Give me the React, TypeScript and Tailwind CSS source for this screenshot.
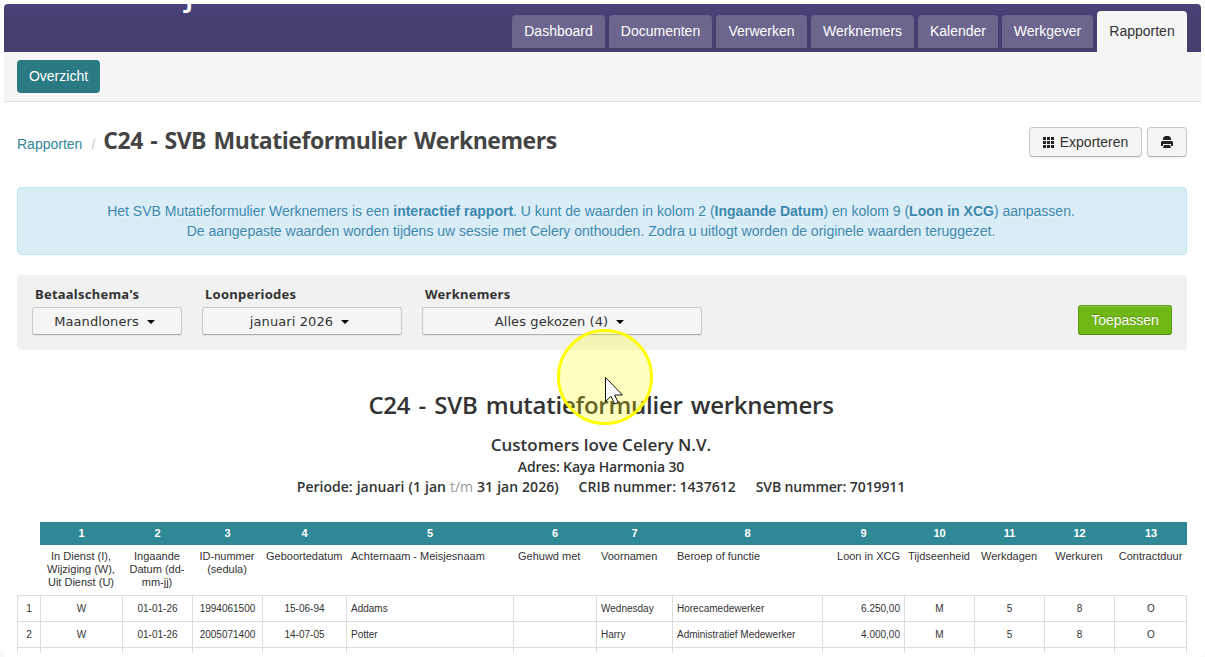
import type { ReactNode } from 'react';

const tabs = [
	{ label: 'Dashboard', width: 'w-[93px]' },
	{ label: 'Documenten', width: 'w-[103px]' },
	{ label: 'Verwerken', width: 'w-[91px]' },
	{ label: 'Werknemers', width: 'w-[103px]' },
	{ label: 'Kalender', width: 'w-[80px]' },
	{ label: 'Werkgever', width: 'w-[91px]' },
];

const columns = [
	{ label: 'In Dienst (I), Wijziging (W), Uit Dienst (U)', align: 'text-center' },
	{ label: 'Ingaande Datum (dd-mm-jj)', align: 'text-center' },
	{ label: 'ID-nummer (sedula)', align: 'text-center' },
	{ label: 'Geboortedatum', align: 'text-center' },
	{ label: 'Achternaam - Meisjesnaam', align: 'text-left' },
	{ label: 'Gehuwd met', align: 'text-left' },
	{ label: 'Voornamen', align: 'text-left' },
	{ label: 'Beroep of functie', align: 'text-left' },
	{ label: 'Loon in XCG', align: 'text-right' },
	{ label: 'Tijdseenheid', align: 'text-center' },
	{ label: 'Werkdagen', align: 'text-center' },
	{ label: 'Werkuren', align: 'text-center' },
	{ label: 'Contractduur', align: 'text-center' },
];

const rows = [
	['W', '01-01-26', '1994061500', '15-06-94', 'Addams', '', 'Wednesday', 'Horecamedewerker', '6.250,00', 'M', '5', '8', 'O'],
	['W', '01-01-26', '2005071400', '14-07-05', 'Potter', '', 'Harry', 'Administratief Medewerker', '4.000,00', 'M', '5', '8', 'O'],
	['', '', '', '', '', '', '', '', '', '', '', '', ''],
];

const gridCols =
	'grid grid-cols-[23px_82px_70px_70px_84px_167px_83px_76px_150px_82px_70px_70px_70px_73px]';

function Caret() {
	return (
		<svg width="8" height="4" viewBox="0 0 8 4" className="ml-2">
			<path d="M0 0h8L4 4z" fill="#000" />
		</svg>
	);
}

function Filter({ label, value, width }: { label: string; value: string; width: string }) {
	return (
		<div className={width}>
			<div className="h-[20px] pl-[3px] leading-[18px] text-[13px] font-bold tracking-[0.25px] font-['Noto_Sans',sans-serif] whitespace-nowrap">
				{label}
			</div>
			<button className="mt-[2px] flex h-[28px] w-full items-center justify-center rounded-[3px] border border-[#c8c8c8] border-b-[#b0b0b0] bg-[#f5f5f5] pt-[2px] pr-[5px] text-[13px] tracking-[0.1px] font-['DejaVu_Sans',sans-serif] shadow-[0_1px_1px_rgba(0,0,0,0.06)]">
				<span>{value}</span>
				<Caret />
			</button>
		</div>
	);
}

function ToolButton({ width, children }: { width: string; children: ReactNode }) {
	return (
		<button
			className={`${width} flex h-[30px] items-center justify-center rounded-[4px] border border-[#c8c8c8] border-b-[#b0b0b0] bg-[#f5f5f5] text-[14px] shadow-[0_1px_1px_rgba(0,0,0,0.06)]`}>
			{children}
		</button>
	);
}

function App() {
	return (
		<div className="relative h-[657px] w-[1205px] overflow-hidden bg-[#f8f8f8] font-['Liberation_Sans',Arial,sans-serif] text-[14px] text-[#333]">
			<div className="h-full rounded-[8px] bg-white p-1">
				<div className="h-[649px] overflow-hidden rounded-t-[4px]">
					{/* <TopBar> */}
					<header className="flex h-[48px] items-end justify-between bg-linear-to-b from-[#494377] to-[#453f70] to-40% pr-[14px]">
						<div className="h-full overflow-hidden pl-[181px]">
							<span className="-mt-[25px] block font-['Open_Sans',sans-serif] text-[30px] leading-[32px] font-semibold text-white">
								j
							</span>
						</div>
						<nav className="flex items-end gap-1">
							{tabs.map((tab) => (
								<a
									key={tab.label}
									className={`${tab.width} mb-1 h-[33px] rounded-t-[4px] bg-[#6c668e] text-center leading-[32px] text-white`}>
									{tab.label}
								</a>
							))}
							<a className="h-[41px] w-[90px] rounded-t-[4px] bg-[#f5f5f5] text-center leading-[40px]">
								Rapporten
							</a>
						</nav>
					</header>
					{/* </TopBar> */}

					{/* <SubNav> */}
					<div className="h-[50px] border-b border-[#dcdcdc] bg-[#f5f5f5] px-[13px] pt-2">
						<a className="block h-[33px] w-[83px] rounded-[4px] bg-[#2a7a84] text-center leading-[32px] text-white">
							Overzicht
						</a>
					</div>
					{/* </SubNav> */}

					<main className="pr-[14px] pl-[13px]">
						{/* <PageTitle> */}
						<div className="flex h-[85px] justify-between pt-[25px]">
							<div className="-mt-[2px] flex items-baseline">
								<a className="text-[#2e8896]">Rapporten</a>
								<span className="ml-[9px] text-[#ccc]">/</span>
								<h1 className="ml-[8px] font-['Open_Sans',sans-serif] text-[23px] leading-[30px] font-bold tracking-[-0.46px] [word-spacing:1.8px] text-[#444] whitespace-nowrap">
									C24 - SVB Mutatieformulier Werknemers
								</h1>
							</div>
							<div className="flex gap-[5px]">
								<ToolButton width="w-[113px]">
									<svg width="11" height="11" viewBox="0 0 11 11" className="mr-[6px]" fill="#222">
										<path d="M0 0h3v3H0zM4 0h3v3H4zM8 0h3v3H8zM0 4h3v3H0zM4 4h3v3H4zM8 4h3v3H8zM0 8h3v3H0zM4 8h3v3H4zM8 8h3v3H8z" />
									</svg>
									Exporteren
								</ToolButton>
								<ToolButton width="w-[40px]">
									<svg width="12" height="12" viewBox="0 0 12 12" fill="#222">
										<path d="M4 0h4l2 2v2H2V2zM1 5h10l1 1v4h-2V8H2v2H0V6zM3 9h6l1 3H2z" />
									</svg>
								</ToolButton>
							</div>
						</div>
						{/* </PageTitle> */}

						{/* <Alert> */}
						<div className="h-[68px] rounded-[4px] border border-[#bce8f1] bg-[#d9edf7] pt-[13px] pr-[22px] text-center leading-[20px] text-[#3a87ad] [text-shadow:0_1px_0_rgba(255,255,255,0.5)]">
							<p>
								Het SVB Mutatieformulier Werknemers is een <b>interactief rapport</b>. U kunt de waarden in kolom 2 (
								<b>Ingaande Datum</b>) en kolom 9 (<b>Loon in XCG</b>) aanpassen.
							</p>
							<p>
								De aangepaste waarden worden tijdens uw sessie met Celery onthouden. Zodra u uitlogt worden de originele
								waarden teruggezet.
							</p>
						</div>
						{/* </Alert> */}

						{/* <Filters> */}
						<div className="mt-5 flex h-[75px] gap-5 rounded-[4px] bg-[#f1f1f1] px-[15px] pt-[10px]">
							<Filter label="Betaalschema's" value="Maandloners" width="w-[150px]" />
							<Filter label="Loonperiodes" value="januari 2026" width="w-[200px]" />
							<Filter label="Werknemers" value="Alles gekozen (4)" width="w-[280px]" />
							<button className="mt-5 ml-auto h-[30px] w-[94px] rounded-[3px] border border-[#5c9c14] border-b-[#4c8410] bg-[#70b816] leading-[28px] text-white shadow-[inset_0_1px_0_rgba(255,255,255,0.2)] [text-shadow:0_-1px_0_rgba(0,0,0,0.25)]">
								Toepassen
							</button>
						</div>
						{/* </Filters> */}

						{/* <ReportHeading> */}
						<div className="h-[172px] pt-[40px] pr-[2px] text-center font-['Open_Sans',sans-serif] font-semibold whitespace-nowrap">
							<h2 className="text-[24px] leading-[30px] tracking-[-0.26px] [word-spacing:2.3px]">
								C24 - SVB mutatieformulier werknemers
							</h2>
							<h3 className="mt-[15px] text-[17px] leading-[20px]">Customers love Celery N.V.</h3>
							<div className="mt-[2px] text-[14px] leading-[20px] tracking-[-0.15px]">Adres: Kaya Harmonia 30</div>
							<div className="flex justify-center gap-[20px] text-[14px] leading-[20px]">
								<span className="[word-spacing:0.4px]">
									Periode: januari (1 jan <span className="font-normal text-[#999]">t/m</span> 31 jan 2026)
								</span>
								<span>CRIB nummer: 1437612</span>
								<span className="tracking-[-0.1px]">SVB nummer: 7019911</span>
							</div>
						</div>
						{/* </ReportHeading> */}

						{/* <Table> */}
						<div className={`${gridCols} text-center text-[11px] leading-[23px] font-bold text-white`}>
							<div />
							{columns.map((column, i) => (
								<div key={column.label} className="bg-[#2e8896] pl-[1px]">
									{i + 1}
								</div>
							))}
						</div>
						<div className={`${gridCols} h-[50px] pt-[5px] text-[11px] leading-[13px]`}>
							<div />
							{columns.map((column) => (
								<div
									key={column.label}
									className={`${column.align} ${column.align === 'text-left' ? 'pl-[5px]' : 'pl-1'} pr-1`}>
									{column.label}
								</div>
							))}
						</div>
						{rows.map((row, r) => (
							<div key={r} className={`${gridCols} h-[26px] border-t border-r border-[#ddd] text-[10px] leading-[25px]`}>
								<div className="border-l border-[#ddd] text-center">{row[0] && r + 1}</div>
								{row.map((cell, i) => (
									<div key={i} className={`${columns[i].align} border-l border-[#ddd] px-1 whitespace-nowrap`}>
										{cell}
									</div>
								))}
							</div>
						))}
						{/* </Table> */}
					</main>
				</div>
			</div>

			{/* <Pointer> */}
			<div className="absolute top-[329px] left-[557px] h-[96px] w-[96px] rounded-full border-[3px] border-[#ff0] bg-[#ff0]/25 bg-clip-padding" />
			<svg className="absolute top-[376px] left-[604px]" width="20" height="30" viewBox="0 0 20 30">
				<path
					d="M1.5 1.5v24l5.5-5.3 3.6 7.8 3.6-1.6-3.5-7.4h7.8z"
					fill="#fff"
					stroke="#111"
				/>
			</svg>
			{/* </Pointer> */}
		</div>
	);
}

export default App;
